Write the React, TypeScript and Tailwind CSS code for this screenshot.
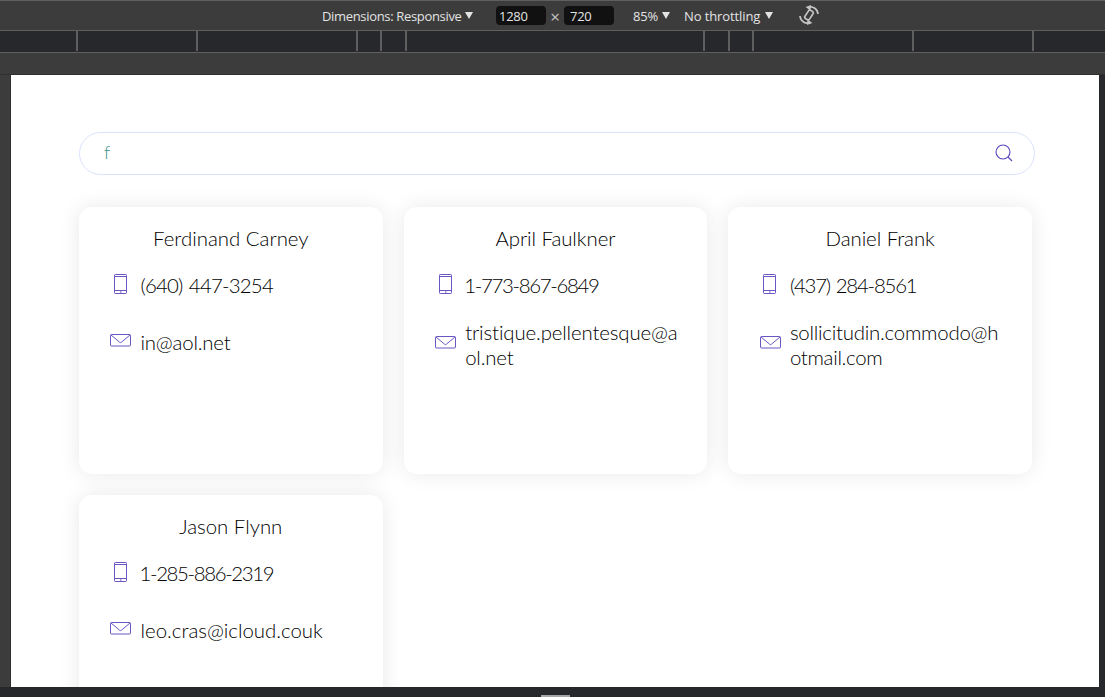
import React from "react";

type Line = { text: string; cls: string };
type Contact = { name: Line; phone: Line; email: Line[] };

const contacts: Contact[] = [
  {
    name: { text: "Ferdinand Carney", cls: "tracking-[0px]" },
    phone: { text: "(640) 447-3254", cls: "tracking-[-0.780px] [word-spacing:1.500px]" },
    email: [{ text: "in@aol.net", cls: "tracking-[-0.200px]" }],
  },
  {
    name: { text: "April Faulkner", cls: "tracking-[-0.050px]" },
    phone: { text: "1-773-867-6849", cls: "ml-[-1px] tracking-[-1.320px]" },
    email: [
      { text: "tristique.pellentesque@a", cls: "tracking-[-0.130px]" },
      { text: "ol.net", cls: "tracking-[-0.200px]" },
    ],
  },
  {
    name: { text: "Daniel Frank", cls: "tracking-[-0.050px]" },
    phone: { text: "(437) 284-8561", cls: "tracking-[-1.200px] [word-spacing:1.500px]" },
    email: [
      { text: "sollicitudin.commodo@h", cls: "tracking-[-0.230px]" },
      { text: "otmail.com", cls: "tracking-[-0.300px]" },
    ],
  },
  {
    name: { text: "Jason Flynn", cls: "tracking-[0px]" },
    phone: { text: "1-285-886-2319", cls: "ml-[-1px] tracking-[-1.360px]" },
    email: [{ text: "leo.cras@icloud.couk", cls: "tracking-[0px]" }],
  },
];

const rulerSegments = [
  "w-[78px]", "w-[120px]", "w-[160px]", "w-[24px]", "w-[25px]",
  "w-[298px]", "w-[25px]", "w-[24px]", "w-[160px]", "w-[120px]",
];

function Caret({ className }: { className: string }) {
  return (
    <svg className={className} width="8" height="7" viewBox="0 0 8 7" fill="#e3e3e3">
      <path d="M0 0h8L4 7z" />
    </svg>
  );
}

function RotateIcon() {
  return (
    <svg className="mt-[4px] ml-[26px] shrink-0" width="20" height="20" viewBox="0 0 20 20" fill="none" stroke="#c4c4c4" strokeWidth="1.700">
      <rect x="7.300" y="5.200" width="5.400" height="9.600" rx="1.600" transform="rotate(33 10 10)" />
      <path d="M9.500 2.200C14 1 18.600 4 19 9" />
      <path d="M10.500 17.800C6 19 1.400 16 1 11" />
      <path d="M12 0L6.600 2l5 3.800zM8 20l5.400-2-5-3.800z" fill="#c4c4c4" stroke="none" />
    </svg>
  );
}

function PhoneIcon() {
  return (
    <svg className="shrink-0" width="13" height="20" viewBox="0 0 13 20" fill="none" stroke="#5a43bb" strokeWidth="0.900">
      <rect x="0.5" y="0.5" width="12" height="19" rx="0.800" />
      <path d="M1 2.500h11M1 16.500h11" />
      <path d="M6 18h1.500" strokeWidth="1.200" />
    </svg>
  );
}

function MailIcon() {
  return (
    <svg className="shrink-0" width="21" height="13" viewBox="0 0 21 13" fill="none" stroke="#5a43bb" strokeWidth="0.900">
      <rect x="0.5" y="0.5" width="20" height="11.500" rx="1" />
      <path d="M1 1l8.600 7.200q.9.700 1.800 0L20 1" />
    </svg>
  );
}

function ContactCard({ contact }: { contact: Contact }) {
  const wrapped = contact.email.length > 1;
  return (
    <article className="h-[266.5px] rounded-[13px] bg-white shadow-[0_0_21px_rgba(0,0,0,0.09)]">
      <h2 className="pt-[19px] text-center leading-[25px]">
        <span className={contact.name.cls}>{contact.name.text}</span>
      </h2>
      <div className="mt-[22px] flex h-[25px]">
        <div className="flex w-[61.5px] pt-[1px] pl-[35px]">
          <PhoneIcon />
        </div>
        <span className={contact.phone.cls}>{contact.phone.text}</span>
      </div>
      <div className={wrapped ? "mt-[22px] flex" : "mt-[32px] flex"}>
        <div className={wrapped ? "w-[61.5px] pt-[16px] pl-[31.400px]" : "w-[61.5px] pt-[4px] pl-[31.400px]"}>
          <MailIcon />
        </div>
        <div>
          {contact.email.map((line) => (
            <div key={line.text} className="whitespace-nowrap">
              <span className={line.cls}>{line.text}</span>
            </div>
          ))}
        </div>
      </div>
    </article>
  );
}

export default function App() {
  return (
    <div className="flex h-[697px] w-[1105px] flex-col overflow-hidden bg-[#3c3c3c]">
      <header className="flex h-[31px] shrink-0 border-y border-[#5f5f5f] pl-[322px] font-['Open_Sans',sans-serif] text-[13px] leading-[31px] whitespace-nowrap text-[#e3e3e3]">
        <div className="flex w-[174px]">
          <span className="tracking-[-0.330px]">Dimensions: Responsive</span>
          <Caret className="mt-[11px] ml-[3.500px]" />
        </div>
        <div className="mt-[5px] h-[19px] w-[50px] rounded-[4px] bg-[#111] pl-[3px] leading-[20px] tracking-[-0.300px]">1280</div>
        <div className="w-[18px] text-center text-[17px] text-[#c4c4c4]">×</div>
        <div className="mt-[5px] h-[19px] w-[50px] rounded-[4px] bg-[#111] pl-[6px] leading-[20px] tracking-[-0.300px]">720</div>
        <div className="flex w-[70px] pl-[19px]">
          <span className="w-[25px] tracking-[-0.200px]">85%</span>
          <Caret className="mt-[11px] ml-[3.500px]" />
        </div>
        <div className="flex">
          <span className="w-[77px] tracking-[-0.100px]">No throttling</span>
          <Caret className="mt-[11px] ml-[3.500px]" />
        </div>
        <RotateIcon />
      </header>
      <div className="flex h-[22px] shrink-0 border-b border-[#5f5f5f] bg-[#27282c]">
        {rulerSegments.map((width, i) => (
          <div key={i} className={`${width} h-[20px] border-r-2 border-[#5f5f5f]`} />
        ))}
      </div>
      <div className="h-[22px] shrink-0 border-b border-[#303030]" />
      <div className="flex h-[612px] shrink-0">
        <div className="w-[11px] border-r border-[#303030]" />
        <main className="h-[612px] w-[1088px] overflow-hidden bg-white pt-[57px] pl-[68px] font-[Lato,sans-serif] text-[20.400px] leading-[25px] font-light text-black">
          <div className="flex h-[42.500px] w-[955.500px] items-center justify-between rounded-full border border-[#dbe3fc] pr-[20.500px] pl-[24px]">
            <span className="pb-[1px] text-[18px] text-[#3c8f8a]">f</span>
            <svg width="18" height="18" viewBox="0 0 18 18" fill="none" stroke="#5a43bb" strokeWidth="1.100">
              <circle cx="8" cy="8" r="7" />
              <path d="M13 13l4 4" />
            </svg>
          </div>
          <section className="mt-[32.500px] grid grid-cols-[303.500px_303.500px_303.500px] gap-x-[21.200px] gap-y-[21.500px]">
            {contacts.map((contact) => (
              <ContactCard key={contact.name.text} contact={contact} />
            ))}
          </section>
        </main>
        <div className="grow bg-[#27282c]" />
      </div>
      <footer className="flex h-[10px] shrink-0 items-end bg-[#27282c] pl-[541px]">
        <div className="h-[2px] w-[29px] bg-[#a6a6a6]" />
      </footer>
    </div>
  );
}
